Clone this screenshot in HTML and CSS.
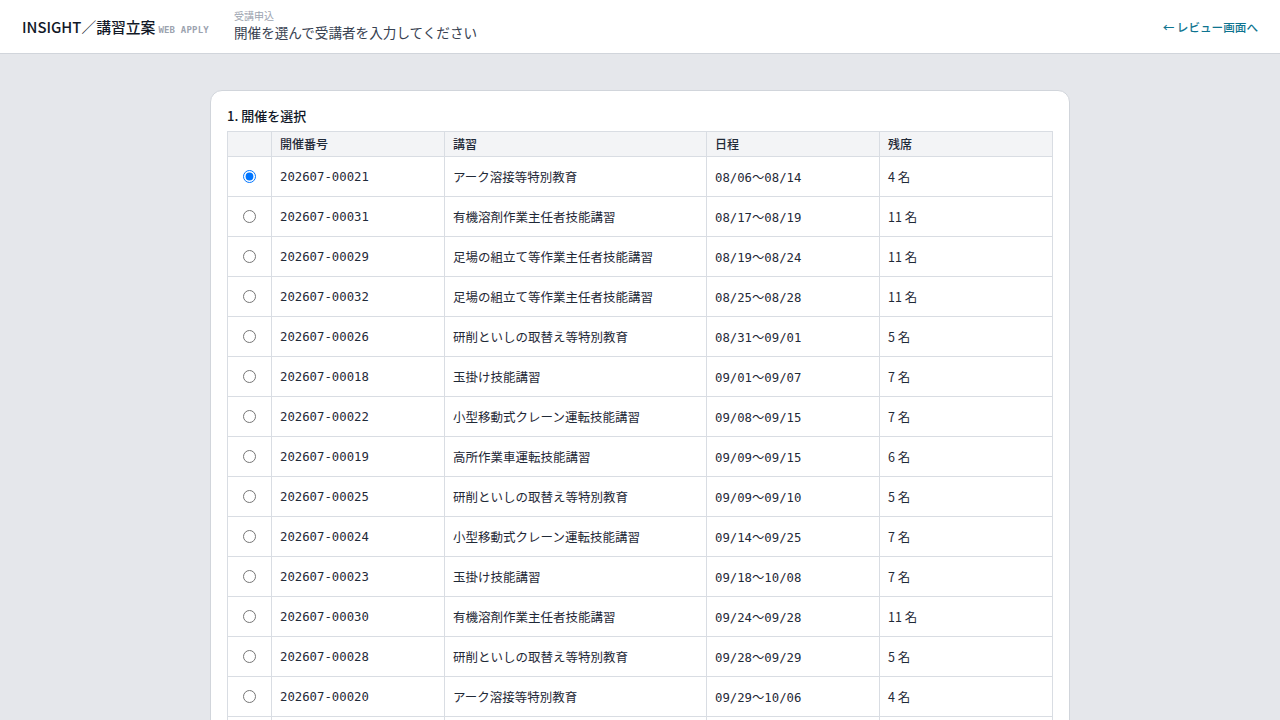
FILE: index.html
```html
<!DOCTYPE html>
<html lang="ja">
<head>
  <meta charset="UTF-8">
  <meta name="viewport" content="width=device-width, initial-scale=1.0">
  <title>受講申込 - INSIGHT 講習立案</title>
  <link rel="stylesheet" href="styles.css">
</head>
<body>
  <div class="header">
    <div class="brand">
      <span class="brand-name">INSIGHT／講習立案</span>
      <span class="brand-tag">WEB APPLY</span>
    </div>
    <div class="page-title">
      <div class="page-kicker">受講申込</div>
      <div class="page-lead">開催を選んで受講者を入力してください</div>
    </div>
    <a class="back-link" href="#">← レビュー画面へ</a>
  </div>

  <div class="main">
    <div class="card">
      <h2 class="card-title">1. 開催を選択</h2>
      <table class="session-table">
        <thead>
          <tr>
            <th class="col-pick"></th>
            <th class="col-id">開催番号</th>
            <th class="col-course">講習</th>
            <th class="col-date">日程</th>
            <th>残席</th>
          </tr>
        </thead>
        <tbody>
          <tr>
            <td class="pick"><input type="radio" name="session" checked></td>
            <td class="mono">202607-00021</td>
            <td>アーク溶接等特別教育</td>
            <td class="mono">08/06<span class="wave">～</span>08/14</td>
            <td>4 名</td>
          </tr>
          <tr>
            <td class="pick"><input type="radio" name="session"></td>
            <td class="mono">202607-00031</td>
            <td>有機溶剤作業主任者技能講習</td>
            <td class="mono">08/17<span class="wave">～</span>08/19</td>
            <td>11 名</td>
          </tr>
          <tr>
            <td class="pick"><input type="radio" name="session"></td>
            <td class="mono">202607-00029</td>
            <td>足場の組立て等作業主任者技能講習</td>
            <td class="mono">08/19<span class="wave">～</span>08/24</td>
            <td>11 名</td>
          </tr>
          <tr>
            <td class="pick"><input type="radio" name="session"></td>
            <td class="mono">202607-00032</td>
            <td>足場の組立て等作業主任者技能講習</td>
            <td class="mono">08/25<span class="wave">～</span>08/28</td>
            <td>11 名</td>
          </tr>
          <tr>
            <td class="pick"><input type="radio" name="session"></td>
            <td class="mono">202607-00026</td>
            <td>研削といしの取替え等特別教育</td>
            <td class="mono">08/31<span class="wave">～</span>09/01</td>
            <td>5 名</td>
          </tr>
          <tr>
            <td class="pick"><input type="radio" name="session"></td>
            <td class="mono">202607-00018</td>
            <td>玉掛け技能講習</td>
            <td class="mono">09/01<span class="wave">～</span>09/07</td>
            <td>7 名</td>
          </tr>
          <tr>
            <td class="pick"><input type="radio" name="session"></td>
            <td class="mono">202607-00022</td>
            <td>小型移動式クレーン運転技能講習</td>
            <td class="mono">09/08<span class="wave">～</span>09/15</td>
            <td>7 名</td>
          </tr>
          <tr>
            <td class="pick"><input type="radio" name="session"></td>
            <td class="mono">202607-00019</td>
            <td>高所作業車運転技能講習</td>
            <td class="mono">09/09<span class="wave">～</span>09/15</td>
            <td>6 名</td>
          </tr>
          <tr>
            <td class="pick"><input type="radio" name="session"></td>
            <td class="mono">202607-00025</td>
            <td>研削といしの取替え等特別教育</td>
            <td class="mono">09/09<span class="wave">～</span>09/10</td>
            <td>5 名</td>
          </tr>
          <tr>
            <td class="pick"><input type="radio" name="session"></td>
            <td class="mono">202607-00024</td>
            <td>小型移動式クレーン運転技能講習</td>
            <td class="mono">09/14<span class="wave">～</span>09/25</td>
            <td>7 名</td>
          </tr>
          <tr>
            <td class="pick"><input type="radio" name="session"></td>
            <td class="mono">202607-00023</td>
            <td>玉掛け技能講習</td>
            <td class="mono">09/18<span class="wave">～</span>10/08</td>
            <td>7 名</td>
          </tr>
          <tr>
            <td class="pick"><input type="radio" name="session"></td>
            <td class="mono">202607-00030</td>
            <td>有機溶剤作業主任者技能講習</td>
            <td class="mono">09/24<span class="wave">～</span>09/28</td>
            <td>11 名</td>
          </tr>
          <tr>
            <td class="pick"><input type="radio" name="session"></td>
            <td class="mono">202607-00028</td>
            <td>研削といしの取替え等特別教育</td>
            <td class="mono">09/28<span class="wave">～</span>09/29</td>
            <td>5 名</td>
          </tr>
          <tr>
            <td class="pick"><input type="radio" name="session"></td>
            <td class="mono">202607-00020</td>
            <td>アーク溶接等特別教育</td>
            <td class="mono">09/29<span class="wave">～</span>10/06</td>
            <td>4 名</td>
          </tr>
          <tr>
            <td class="pick"><input type="radio" name="session"></td>
            <td class="mono">202607-00027</td>
            <td>玉掛け技能講習</td>
            <td class="mono">10/01<span class="wave">～</span>10/07</td>
            <td>7 名</td>
          </tr>
        </tbody>
      </table>
    </div>
  </div>
</body>
</html>
```

FILE: styles.css
```css
body {
  margin: 0;
  padding: 0;
  font-family: "Noto Sans CJK JP", "Noto Sans", sans-serif;
  color: #1f2937;
  background-color: #e5e7eb;
}
.header {
  display: flex;
  align-items: center;
  height: 53px;
  padding: 0 22px;
  background-color: #ffffff;
  border-bottom: 1px solid #d1d5db;
}
.brand {
  display: flex;
  align-items: baseline;
  gap: 3px;
}
.brand-name {
  font-size: 14.8px;
  font-weight: 500;
  color: #111827;
}
.brand-tag {
  font-family: "DejaVu Sans Mono", monospace;
  font-size: 9px;
  font-weight: 700;
  letter-spacing: 0.2px;
  color: #9ca3af;
}
.page-title {
  margin-left: 25px;
  margin-top: -2px;
}
.page-kicker {
  font-size: 10px;
  line-height: 12px;
  color: #9ca3af;
}
.page-lead {
  font-size: 13.6px;
  line-height: 20px;
  color: #374151;
}
.back-link {
  margin-left: auto;
  font-size: 11.6px;
  font-weight: 500;
  color: #0e7490;
  text-decoration: none;
}
.main {
  padding: 36px 0;
}
.card {
  max-width: 826px;
  margin: 0 auto;
  padding: 16px;
  background-color: #ffffff;
  border: 1px solid #d1d5db;
  border-radius: 12px;
}
.card-title {
  margin: 0 0 6px;
  font-size: 13px;
  line-height: 18px;
  font-weight: 500;
  color: #111827;
}
.session-table {
  width: 100%;
  border-collapse: collapse;
  table-layout: fixed;
}
.session-table th,
.session-table td {
  border: 1px solid #d9dde3;
  padding: 0 8px;
  text-align: left;
}
.session-table th {
  height: 24px;
  font-size: 12px;
  line-height: 16px;
  font-weight: 500;
  background-color: #f3f4f6;
  color: #1f2937;
}
.session-table td {
  height: 39px;
  font-size: 12.5px;
  color: #1f2937;
}
.col-pick {
  width: 27px;
}
.col-id {
  width: 156px;
}
.col-course {
  width: 245px;
}
.col-date {
  width: 156px;
}
.session-table td.pick {
  padding: 0;
}
.pick input {
  display: block;
  margin: 0 auto;
  width: 13px;
  height: 13px;
}
.session-table td.mono {
  font-family: "DejaVu Sans Mono", monospace;
  font-size: 12.3px;
}
.wave {
  font-family: "Noto Sans CJK JP", sans-serif;
}
```
